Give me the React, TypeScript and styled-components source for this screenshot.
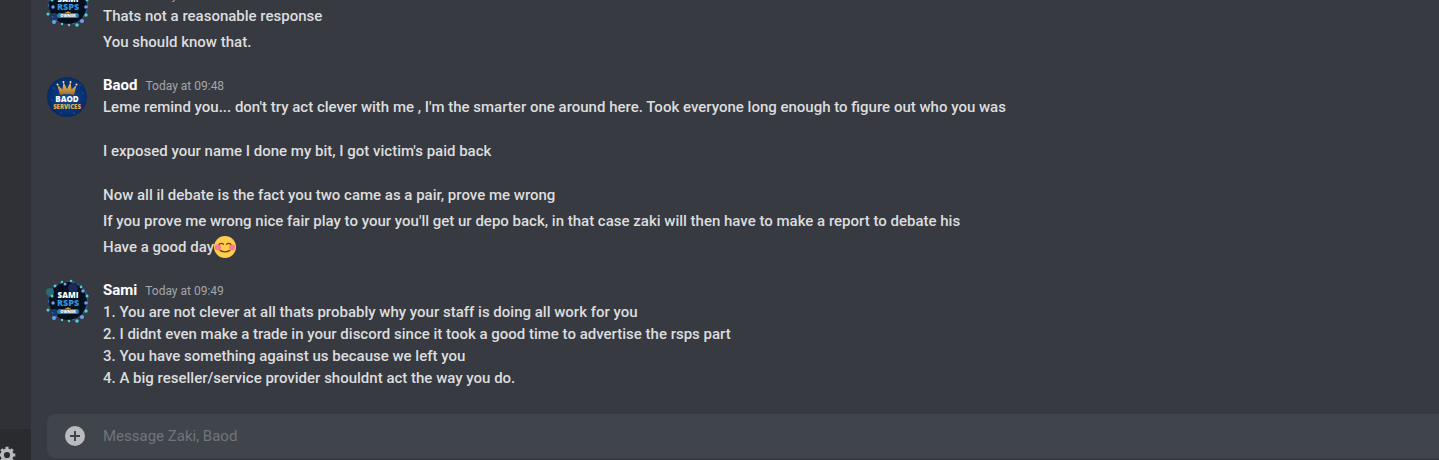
import React from "react";
import styled, { createGlobalStyle } from "styled-components";

const GlobalStyle = createGlobalStyle`
  * { box-sizing: border-box; }
  html, body { margin: 0; height: 100%; }
  body {
    background: #36393f;
    color: #dcddde;
    font-family: Roboto, "Noto Sans", sans-serif;
    font-size: 15px;
    font-weight: 500;
    line-height: 22px;
    overflow: hidden;
  }
`;

const Layout = styled.div`
  display: flex;
  height: 100vh;
  overflow: hidden;
`;

const Sidebar = styled.aside`
  flex: 0 0 31px;
  display: flex;
  flex-direction: column;
  justify-content: flex-end;
  background: #303136;
`;

const UserPanel = styled.div`
  height: 31px;
  padding-top: 16px;
  background: #2a2b2f;
  overflow: hidden;
`;

const IconButton = styled.button`
  display: block;
  flex: none;
  padding: 0;
  border: 0;
  background: none;
  color: #b9bbbe;
  cursor: pointer;

  svg { display: block; }
`;

const Chat = styled.main`
  flex: 1;
  min-width: 0;
  display: flex;
  flex-direction: column;
  background: #373a41;
`;

const MessageList = styled.div`
  flex: 1;
  min-height: 0;
  display: flex;
  flex-direction: column;
  justify-content: flex-end;
  gap: 17px;
  padding-bottom: 23px;
  overflow: hidden;
`;

const Group = styled.article`
  flex: none;
  display: flex;
  gap: 14px;
  padding-left: 14px;
`;

const Avatar = styled.svg`
  flex: none;
  width: 44px;
  height: 44px;
  margin-top: 2px;
  font-family: "Open Sans", sans-serif;
`;

const Body = styled.div`
  min-width: 0;
`;

const Header = styled.header`
  display: flex;
  align-items: baseline;
  gap: 8px;
  height: 24px;
  padding-top: 2px;
`;

const Author = styled.h3`
  margin: 0;
  color: #ffffff;
  font-size: 15px;
  font-weight: 700;
  line-height: 22px;
`;

const Time = styled.time`
  color: #a3a6aa;
  font-size: 12px;
  font-weight: 400;
  line-height: 22px;
`;

const Message = styled.p`
  margin: 0;
  padding-bottom: 2px;
  white-space: pre-wrap;

  & + & { padding-top: 2px; }
`;

const Emoji = styled.svg`
  width: 22px;
  height: 22px;
  vertical-align: bottom;
`;

const Composer = styled.form`
  flex: none;
  display: flex;
  align-items: center;
  gap: 18px;
  height: 44px;
  margin: 0 0 2px 16px;
  padding-left: 18px;
  border-radius: 8px 0 0 8px;
  background: #40444b;
`;

const MessageInput = styled.input`
  flex: 1;
  min-width: 0;
  padding: 0;
  border: 0;
  outline: 0;
  background: none;
  color: #dcddde;
  font: inherit;
  font-weight: 400;

  &::placeholder { color: #70747c; opacity: 1; }
`;

function SamiAvatar() {
  return (
    <Avatar viewBox="0 0 44 44" role="img" aria-label="Sami">
      <circle cx="23" cy="22" r="19" fill="#05101f" />
      <circle cx="28" cy="9" r="5" fill="#1b2b55" />
      <circle cx="9" cy="34" r="4" fill="#1c3a66" />
      <circle cx="5" cy="13" r="4" fill="#2b6a72" />
      <circle cx="23" cy="22" r="19.5" fill="none" stroke="#2f5f96" strokeWidth="1.500" strokeDasharray="1 4 3 3 2 5" />
      <g fill="#4fd0dc">
        <circle cx="3" cy="31" r="1.6" />
        <circle cx="7" cy="17" r="1.5" />
        <circle cx="10" cy="7" r="1.4" />
        <circle cx="17" cy="3" r="1.2" />
        <circle cx="26" cy="2" r="1.3" />
        <circle cx="36" cy="8" r="1.4" />
        <circle cx="42" cy="17" r="1.5" />
        <circle cx="41" cy="32" r="1.7" />
        <circle cx="32" cy="42" r="1.8" />
        <circle cx="24" cy="42" r="1.2" />
        <circle cx="17" cy="41" r="1.2" />
      </g>
      <g fill="#6fa0f0">
        <circle cx="8" cy="24" r="1.7" />
        <circle cx="9" cy="39" r="2" />
        <circle cx="38" cy="12" r="1.8" />
        <circle cx="41" cy="24" r="1.8" />
        <circle cx="37" cy="38" r="2" />
        <circle cx="20" cy="5" r="1.5" />
      </g>
      <text x="23" y="19" textAnchor="middle" fontSize="8" fontWeight="800" fill="#ffffff">SAMI</text>
      <text x="23" y="27" textAnchor="middle" fontSize="9" fontWeight="800" fill="#2f8fdd">RSPS</text>
      <path d="M20.500 30.500v-2l1.200 1 1.300-1.600 1.300 1.600 1.200-1v2z" fill="#e7a43a" />
      <rect x="12" y="30" width="22" height="5" rx="2.500" fill="#2b7fae" />
      <text x="23" y="34" textAnchor="middle" fontSize="4" fontWeight="800" fill="#ffffff">OWNER</text>
    </Avatar>
  );
}

function BaodAvatar() {
  return (
    <Avatar viewBox="0 -2 44 44" role="img" aria-label="Baod">
      <defs>
        <radialGradient id="baod-sky">
          <stop offset="0" stopColor="#0b4a9c" />
          <stop offset="1" stopColor="#062a66" />
        </radialGradient>
        <linearGradient id="baod-gold" x1="0" y1="0" x2="0" y2="1">
          <stop offset="0" stopColor="#f4cf70" />
          <stop offset="1" stopColor="#a8691c" />
        </linearGradient>
      </defs>
      <circle cx="22" cy="21" r="20" fill="url(#baod-sky)" />
      <g fill="#4d8fe0">
        <circle cx="9" cy="12" r=".6" />
        <circle cx="35" cy="9" r=".6" />
        <circle cx="38" cy="17" r=".5" />
        <circle cx="7" cy="24" r=".5" />
        <circle cx="29" cy="37" r=".6" />
        <circle cx="16" cy="37" r=".5" />
      </g>
      <path d="M15 19 12.500 9l5 4.500L18.500 6l3.500 7 3.500-7 1 7.500 5-4.500L29 19q-7-2-14 0z" fill="url(#baod-gold)" />
      <g fill="#ffe29a">
        <circle cx="12.500" cy="8.500" r="1" />
        <circle cx="18.500" cy="6" r="1" />
        <circle cx="25.500" cy="6" r="1" />
        <circle cx="31.500" cy="8.500" r="1" />
      </g>
      <text x="22" y="26" textAnchor="middle" fontSize="8" fontWeight="800" fill="#ffffff">BAOD</text>
      <text x="22" y="33" textAnchor="middle" fontSize="6" fontWeight="800" fill="#e9a94b">SERVICES</text>
    </Avatar>
  );
}

function BlushEmoji() {
  return (
    <Emoji viewBox="0 0 36 36" role="img" aria-label="blush">
      <circle cx="18" cy="18" r="18" fill="#ffcc4d" />
      <circle cx="6.500" cy="18.500" r="5" fill="#ff7892" />
      <circle cx="29.500" cy="18.500" r="5" fill="#ff7892" />
      <g fill="none" stroke="#664500" strokeWidth="2" strokeLinecap="round">
        <path d="M8.500 13.500q3.500-3 7 0M20.500 13.500q3.500-3 7 0M10 23.500q8 5 16 0" />
      </g>
    </Emoji>
  );
}

export default function App() {
  return (
    <>
      <GlobalStyle />
      <Layout>
        <Sidebar>
          <UserPanel>
            <IconButton type="button" aria-label="User Settings">
              <svg width="16" height="20" viewBox="-7 -10 16 20" fill="none" stroke="currentColor">
                <circle r="4.800" strokeWidth="3.400" />
                <path
                  strokeWidth="3"
                  d="M0-8.300V-5M0 8.300V5M-8.300 0H-5M8.300 0H5M-5.700-5.700l2.200 2.200M5.700-5.700 3.500-3.500M-5.700 5.700l2.200-2.200M5.700 5.700 3.500 3.500"
                />
              </svg>
            </IconButton>
          </UserPanel>
        </Sidebar>
        <Chat>
          <MessageList>
            <Group>
              <SamiAvatar />
              <Body>
                <Header>
                  <Author>Sami</Author>
                  <Time>Today at 09:47</Time>
                </Header>
                <Message>Thats not a reasonable response</Message>
                <Message>You should know that.</Message>
              </Body>
            </Group>
            <Group>
              <BaodAvatar />
              <Body>
                <Header>
                  <Author>Baod</Author>
                  <Time>Today at 09:48</Time>
                </Header>
                <Message>
                  {"Leme remind you... don't try act clever with me , I'm the smarter one around here. Took everyone long enough to figure out who you was\n\nI exposed your name I done my bit, I got victim's paid back\n\nNow all il debate is the fact you two came as a pair, prove me wrong"}
                </Message>
                <Message>
                  If you prove me wrong nice fair play to your you'll get ur depo back, in that case zaki will then have to make a report to debate his
                </Message>
                <Message>
                  Have a good day
                  <BlushEmoji />
                </Message>
              </Body>
            </Group>
            <Group>
              <SamiAvatar />
              <Body>
                <Header>
                  <Author>Sami</Author>
                  <Time>Today at 09:49</Time>
                </Header>
                <Message>
                  {"1. You are not clever at all thats probably why your staff is doing all work for you\n2. I didnt even make a trade in your discord since it took a good time to advertise the rsps part\n3. You have something against us because we left you\n4. A big reseller/service provider shouldnt act the way you do."}
                </Message>
              </Body>
            </Group>
          </MessageList>
          <Composer onSubmit={(event) => event.preventDefault()}>
            <IconButton type="button" aria-label="Attach a file">
              <svg width="20" height="20" viewBox="0 0 20 20">
                <circle cx="10" cy="10" r="10" fill="currentColor" />
                <path d="M10 5v10M5 10h10" stroke="#40444b" strokeWidth="2" />
              </svg>
            </IconButton>
            <MessageInput type="text" aria-label="Message Zaki, Baod" placeholder="Message Zaki, Baod" />
          </Composer>
        </Chat>
      </Layout>
    </>
  );
}
